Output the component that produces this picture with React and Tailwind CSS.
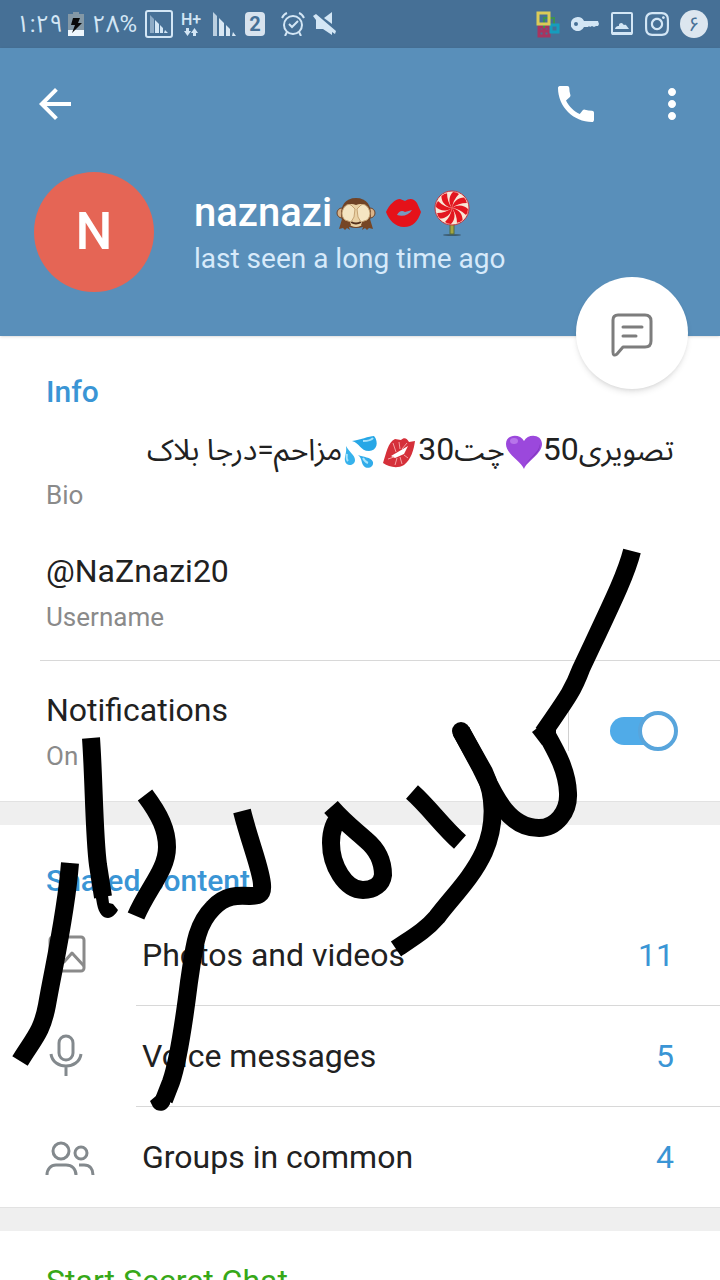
import { useState } from 'react';
import { MdArrowBack, MdCall, MdMoreVert } from 'react-icons/md';
import { FaInstagram } from 'react-icons/fa';

const BatteryIcon = () => (
  <svg className="w-4 h-6" viewBox="0 0 16 24">
    <path d="M5 0h6v2h5v22H0V2h5z" fill="#8398a6" />
    <path d="M0 18h16v6H0z" fill="#eef6fc" />
    <path d="M5 6h7l-2 5h4L4 21l3-8H3z" fill="#0a0a0a" />
  </svg>
);

const BoxedSignalIcon = () => (
  <svg className="w-7 h-7" viewBox="0 0 28 28" fill="#d3e6f5">
    <rect x="1" y="1" width="26" height="26" rx="2" fill="none" stroke="#d3e6f5" strokeWidth="2" />
    <path d="M5 5l4 4v14H5z" opacity=".5" />
    <path d="M10 10l4 4v9h-4zM15 15l3 3v5h-3zM20 20l3 3h-4z" />
  </svg>
);

const SignalIcon = () => (
  <svg className="w-6 h-6" viewBox="0 0 24 24" fill="#d8e7f3">
    <path d="M0 0l4 4v20H0z" opacity=".8" />
    <path d="M6 6l5 5v13H6zM13 13l4 4v7h-4zM20 20l3 4h-4z" />
  </svg>
);

const DataArrows = () => (
  <svg className="w-4 h-2" viewBox="0 0 16 8" fill="#d3e6f5">
    <path d="M3 0h3v3h2L4.500 8 1 3h2zM10 8h3V5h2l-3.500-5L8 5h2z" />
  </svg>
);

const AlarmIcon = () => (
  <svg className="w-6 h-6" viewBox="0 0 24 24" fill="none" stroke="#d3e6f5" strokeWidth="2">
    <circle cx="12" cy="13" r="9" />
    <path d="M8 12l3 3 6-6M1 6q2-4 5-5M23 6q-2-4-5-5M6 20l-2 4M18 20l2 4" />
  </svg>
);

const MuteIcon = () => (
  <svg className="w-6 h-6" viewBox="0 0 24 24" fill="#d3e6f5">
    <path d="M11 6l8-6v12z" />
    <path d="M0 4l3-2 20 17-1 3-3-2v3l-9-6H3V8z" />
  </svg>
);

const SquaresIcon = () => (
  <svg className="w-6 h-7" viewBox="0 0 24 28" fill="none" strokeWidth="3">
    <path d="M3 17h10v9H3zM3 21h10M8 17v9" stroke="#a8345f" />
    <path d="M7 8h11v8M8 18V9" stroke="#3d9150" strokeWidth="2" />
    <path d="M15 15h7v7h-7z" stroke="#159dbd" />
    <path d="M2 3h11v11H2z" stroke="#dccb58" />
  </svg>
);

const KeyIcon = () => (
  <svg className="w-7 h-4" viewBox="0 0 28 16" fill="#d3e6f5">
    <path fillRule="evenodd" d="M7 1a7 7 0 1 0 6 10h4l1-1 1 1 2-1 2 1 2-1h2l1-2-1-3H13a7 7 0 0 0-6-4zM5 6a2 2 0 1 1 0 4 2 2 0 0 1 0-4z" />
  </svg>
);

const GalleryIcon = () => (
  <svg className="w-6 h-6" viewBox="0 0 24 24">
    <rect x="2" y="1" width="20" height="21" rx="1" fill="none" stroke="#d3e6f5" strokeWidth="2" />
    <path d="M5 17c1-4 4-2 4-4s3-3 4-1 2 0 3 1 2 3 3 4zM2 20h20v3H2z" fill="#d3e6f5" />
  </svg>
);

const MonkeyEmoji = () => (
  <svg className="w-10 h-10" viewBox="0 0 40 40">
    <circle cx="6" cy="20" r="5" fill="#d9b48a" stroke="#6b432a" />
    <circle cx="34" cy="20" r="5" fill="#d9b48a" stroke="#6b432a" />
    <path d="M20 5c11 0 15 8 15 16S30 35 20 35 5 29 5 21 9 5 20 5z" fill="#704326" />
    <path d="M20 12c8-3 12 2 12 9 0 8-6 13-12 13S8 29 8 21c0-7 4-12 12-9z" fill="#ead1a4" />
    <path d="M15 29q5 3 10 0" stroke="#54301b" strokeWidth="2" fill="none" />
    <path d="M3 36l3-10 7 1 2 5-2 2 1 3-3-2-2 2-2-2zM37 36l-3-10-7 1-2 5 2 2-1 3 3-2 2 2 2-2z" fill="#764625" />
    <path d="M6 20c1-6 5-10 9-8l4 4-1 8-3 5-6-2c-2-2-3-4-3-7zM34 20c-1-6-5-10-9-8l-4 4 1 8 3 5 6-2c2-2 3-4 3-7z" fill="#f5e5c2" stroke="#c5a273" />
  </svg>
);

const LipsEmoji = () => (
  <svg className="w-10 h-10" viewBox="0 0 40 40">
    <path d="M2 19C5 12 11 6 16 6l5 2c4-3 9-3 12 2l4 9c-3 9-8 15-17 15C11 34 5 27 2 19z" fill="#e5121a" />
    <path d="M13 22c2-4 5-5 8-3l7-2c-3 5-9 7-15 5z" fill="#7799bf" />
  </svg>
);

const LollipopEmoji = () => (
  <svg className="w-10 h-12" viewBox="0 0 40 48">
    <ellipse cx="20" cy="46" rx="9" ry="1" fill="#3c5c70" />
    <path d="M18 34h4v11h-4z" fill="#a5a540" stroke="#556c3b" />
    <circle cx="20" cy="19" r="17" fill="#f8e7d7" stroke="#c5303a" />
    <g fill="#e3161f">
      {[0, 45, 90, 135, 180, 225, 270, 315].map((angle) => (
        <path key={angle} d="M20 19C16 13 17 7 21 3q4 0 6 2-6 6-7 14z" transform={`rotate(${angle} 20 19)`} />
      ))}
    </g>
  </svg>
);

const HeartEmoji = () => (
  <svg className="inline-block align-middle w-[38px] h-9" viewBox="0 0 38 36">
    <path d="M19 35C16 27 1 20 1 10 1 0 15-1 19 7c4-8 18-7 18 3 0 10-15 17-18 25z" fill="#9b48dc" />
    <path d="M19 33C23 24 34 19 35 10c1 10-12 15-16 23z" fill="#8238bd" />
    <ellipse cx="9" cy="7" rx="4" ry="3" fill="#b775ea" />
  </svg>
);

const KissEmoji = () => (
  <svg className="inline-block align-middle w-[38px] h-9" viewBox="0 0 36 36">
    <path d="M2 29C5 20 7 8 14 5l6 1c3-3 6-2 8 2l6-1c-1 8-4 19-11 24-7 4-15 2-21-2z" fill="#d5303a" />
    <path d="M10 22l17-10-4 8-9 4z" fill="#fff" />
    <path d="M12 9l3 9M18 8l1 7M26 9l-5 6M7 25l6-2M14 31l2-7M21 30l-2-7M27 24l-4-3" stroke="#f4a1a4" />
  </svg>
);

const DropsEmoji = () => (
  <svg className="inline-block align-middle w-[38px] h-9" viewBox="0 0 36 36">
    <path d="M9 7c8-1 17-5 22-5 5 6 3 15-5 15C17 17 17 9 9 7z" fill="#27a7e6" />
    <path d="M3 12c3 6 9 9 9 14 0 6-9 7-10 1-1-4 2-8 1-15z" fill="#36b2ec" />
    <path d="M15 21c5 2 13 2 15 7 1 6-7 8-10 3-2-3-1-7-5-10z" fill="#31acea" />
    <path d="M20 7q8 0 10-3M4 20q-1 5 1 7M20 24q2 4 5 5" stroke="#a6e2fb" strokeWidth="2" fill="none" />
  </svg>
);

const ChatIcon = () => (
  <svg className="w-12 h-12" viewBox="0 0 48 48" fill="none" stroke="#7d7d7d" strokeWidth="3" strokeLinecap="round" strokeLinejoin="round">
    <path d="M10 6h27q6 0 6 6v20q0 6-6 6H15l-6 7q-4 3-4-2V11q0-5 5-5z" />
    <path d="M15 18h19M15 27h13" />
  </svg>
);

const PhotosIcon = () => (
  <svg className="w-13 h-12" viewBox="0 0 52 48" fill="none" stroke="#8a8a8a" strokeWidth="3" strokeLinejoin="round">
    <rect x="6" y="5" width="34" height="34" rx="3" />
    <path d="M6 33l8-8 6 5 8-9 12 13" />
  </svg>
);

const MicIcon = () => (
  <svg className="w-13 h-12" viewBox="0 0 52 48" fill="none" stroke="#83898d" strokeWidth="3">
    <rect x="15" y="3" width="14" height="24" rx="7" />
    <path d="M7 21c2 16 28 16 30 0M22 33v10" />
  </svg>
);

const GroupIcon = () => (
  <svg className="w-13 h-12" viewBox="0 0 52 48" fill="none" stroke="#83898d" strokeWidth="3">
    <circle cx="17" cy="18" r="8" />
    <circle cx="37" cy="20" r="6" />
    <path d="M3 42c0-6 4-10 9-10h10c6 0 10 4 10 10M35 32h5c6 0 9 4 9 10" />
  </svg>
);

// freehand marker strokes over the page
const Scribble = () => (
  <svg className="absolute top-0 left-0 w-[720px] h-[1280px] pointer-events-none" viewBox="0 0 720 1280" fill="none" stroke="#000" strokeWidth="18" aria-hidden="true">
    <path d="M632 551C626 575 612 603 581 669C572 693 565 701 543 733" />
    <path d="M543 728C554 748 567 768 568 793C569 812 556 828 539 828C508 828 494 795 481 768L461 731" />
    <path d="M532 732L545 722L556 728V739L542 745Z" fill="#000" stroke="none" />
    <path d="M461 731L484 772C495 795 496 825 484 852C472 878 452 897 437 917C425 931 412 938 396 949" />
    <circle cx="461" cy="731" r="9" fill="#000" stroke="none" />
    <path d="M412 792C429 807 442 826 460 842" />
    <path d="M331 807C345 823 355 830 366 840C378 850 383 862 383 875C382 884 374 890 363 890C345 890 331 865 331 843C331 830 334 822 341 815" />
    <path d="M242 811C250 843 262 872 262 885C263 895 258 896 250 896C238 895 225 895 213 908C195 926 194 950 189 982C183 1030 177 1065 171 1082L164 1100" strokeLinejoin="round" />
    <path d="M170 1076L156 1096L150 1101L153 1107C158 1113 166 1112 170 1104Z" fill="#000" stroke="none" />
    <path d="M145 795C160 815 167 830 167 847C167 870 148 888 136 916" />
    <path d="M91 738C94 780 94 835 98 865L103 897" />
    <path d="M91 870L97 904C99 914 103 918 108 918C112 918 116 914 118 910L113 904L109 903L106 880Z" fill="#000" stroke="none" />
    <path d="M70 863C66 915 54 965 47 1005C42 1032 34 1038 20 1061" />
  </svg>
);

const StatusBar = () => (
  <div className="h-12 bg-[#467096] flex items-center justify-between pl-4 pr-3 text-[#d3e6f5]">
    <div className="flex items-center">
      <span className="w-[52px] text-2xl leading-8 whitespace-nowrap">۱:۲۹</span>
      <BatteryIcon />
      <span className="w-[61px] pl-2 text-2xl leading-8 whitespace-nowrap">۲۸%</span>
      <BoxedSignalIcon />
      <div className="w-9 flex flex-col items-center">
        <span className="text-base leading-4 font-medium">H+</span>
        <DataArrows />
      </div>
      <div className="flex items-center gap-2 pl-1">
        <SignalIcon />
        <span className="w-5 h-6 rounded-sm bg-[#d8e3ee] text-[#467096] text-xl leading-6 font-bold text-center">2</span>
      </div>
      <div className="flex items-center gap-2 pl-4">
        <AlarmIcon />
        <MuteIcon />
      </div>
    </div>
    <div className="flex items-center gap-[11px]">
      <SquaresIcon />
      <KeyIcon />
      <GalleryIcon />
      <FaInstagram className="w-6 h-7" />
      <span className="w-7 h-7 rounded-full bg-[#dce6ef] text-[#467096] text-xl leading-7 text-center">۶</span>
    </div>
  </div>
);

const ProfileHeader = () => (
  <header className="relative bg-[#598fba] pb-11 shadow">
    <div className="h-28 flex items-center justify-between pl-[31px] pr-6 text-white">
      <button aria-label="Back">
        <MdArrowBack className="w-12 h-12" />
      </button>
      <div className="flex gap-12">
        <button aria-label="Call">
          <MdCall className="w-12 h-12" />
        </button>
        <button aria-label="More options">
          <MdMoreVert className="w-12 h-12" />
        </button>
      </div>
    </div>
    <div className="flex items-center gap-10 pl-[34px] pt-3">
      <div className="w-[120px] h-[120px] rounded-full bg-[#e56555] text-white text-[52px] font-medium flex items-center justify-center">
        N
      </div>
      <div className="pt-[6px]">
        <h1 className="flex items-center h-12 text-[40px] font-medium text-white">
          naznazi
          <span className="flex items-center gap-2 pl-1">
            <MonkeyEmoji />
            <LipsEmoji />
            <LollipopEmoji />
          </span>
        </h1>
        <p className="text-[28px] leading-[44px] text-[#d7eafa]">last seen a long time ago</p>
      </div>
    </div>
    <button
      aria-label="Send message"
      className="absolute right-8 -bottom-[53px] w-28 h-28 rounded-full bg-white shadow-md flex items-center justify-center"
    >
      <ChatIcon />
    </button>
  </header>
);

const InfoItem = ({ label, children }) => (
  <div>
    <div className="text-[32px] leading-[48px] text-[#212121]">{children}</div>
    <div className="mt-[6px] text-[26px] leading-8 text-[#8a8a8a]">{label}</div>
  </div>
);

const Fa = ({ children }) => <span className="text-[30px]">{children}</span>;

const Toggle = ({ checked, onChange }) => (
  <span className="relative flex items-center w-[68px] h-10">
    <input
      id="notifications"
      type="checkbox"
      checked={checked}
      onChange={onChange}
      className="peer appearance-none w-16 h-7 rounded-full bg-[#b0b0b0] checked:bg-[#50abe8]"
    />
    <span className="absolute top-0 left-0 w-10 h-10 rounded-full bg-white border-4 border-[#b0b0b0] pointer-events-none peer-checked:left-7 peer-checked:border-[#58a5dc]" />
  </span>
);

const sharedRows = [
  { label: 'Photos and videos', count: 11, Icon: PhotosIcon },
  { label: 'Voice messages', count: 5, Icon: MicIcon },
  { label: 'Groups in common', count: 4, Icon: GroupIcon },
];

const Separator = () => <div className="h-6 bg-[#efefef] border-t border-[#e2e2e2]" />;

export default function App() {
  const [notify, setNotify] = useState(true);

  return (
    <div className="relative h-screen overflow-hidden bg-white font-['Roboto','Noto_Sans_Arabic','DejaVu_Sans',sans-serif]">
      <StatusBar />
      <ProfileHeader />

      <section className="pt-9 pb-[27px] px-[46px]">
        <h2 className="text-[30px] leading-10 font-medium text-[#3a95d5]">Info</h2>
        <div className="mt-[13px] flex flex-col gap-9">
          <InfoItem label="Bio">
            <p dir="rtl" className="h-12 whitespace-nowrap">
              <Fa>تصویری</Fa>50<HeartEmoji /><Fa>چت</Fa>30<KissEmoji /><DropsEmoji /><Fa>مزاحم=درجا بلاک</Fa>
            </p>
          </InfoItem>
          <InfoItem label="Username">@NaZnazi20</InfoItem>
        </div>
      </section>

      <section className="ml-10 border-t border-[#d8d8d8] pt-[25px] pb-[29px] pl-[6px] pr-[42px] flex items-center justify-between">
        <label htmlFor="notifications">
          <InfoItem label={notify ? 'On' : 'Off'}>Notifications</InfoItem>
        </label>
        <div className="flex items-center gap-[41px] pt-1">
          <span className="w-px h-10 bg-[#d0d0d0]" />
          <Toggle checked={notify} onChange={() => setNotify(!notify)} />
        </div>
      </section>

      <Separator />

      <section className="pt-9">
        <h2 className="pl-[46px] pb-1 text-[30px] leading-10 font-medium text-[#3a95d5]">Shared content</h2>
        <ul>
          {sharedRows.map(({ label, count, Icon }) => (
            <li key={label} className="group flex items-center">
              <span className="w-[136px] shrink-0 pl-11">
                <Icon />
              </span>
              <a href="#" className="flex-1 h-[101px] flex items-center justify-between pl-[6px] pr-[46px] text-[32px] border-b border-[#d8d8d8] group-last:border-b-0 group-last:h-[100px]">
                <span className="text-[#212121]">{label}</span>
                <span className="text-[#3a95d5]">{count}</span>
              </a>
            </li>
          ))}
        </ul>
      </section>

      <Separator />

      <section className="pt-[26px] px-[46px]">
        <button className="text-[32px] leading-[48px] text-[#37a818]">Start Secret Chat</button>
      </section>

      <Scribble />
    </div>
  );
}
